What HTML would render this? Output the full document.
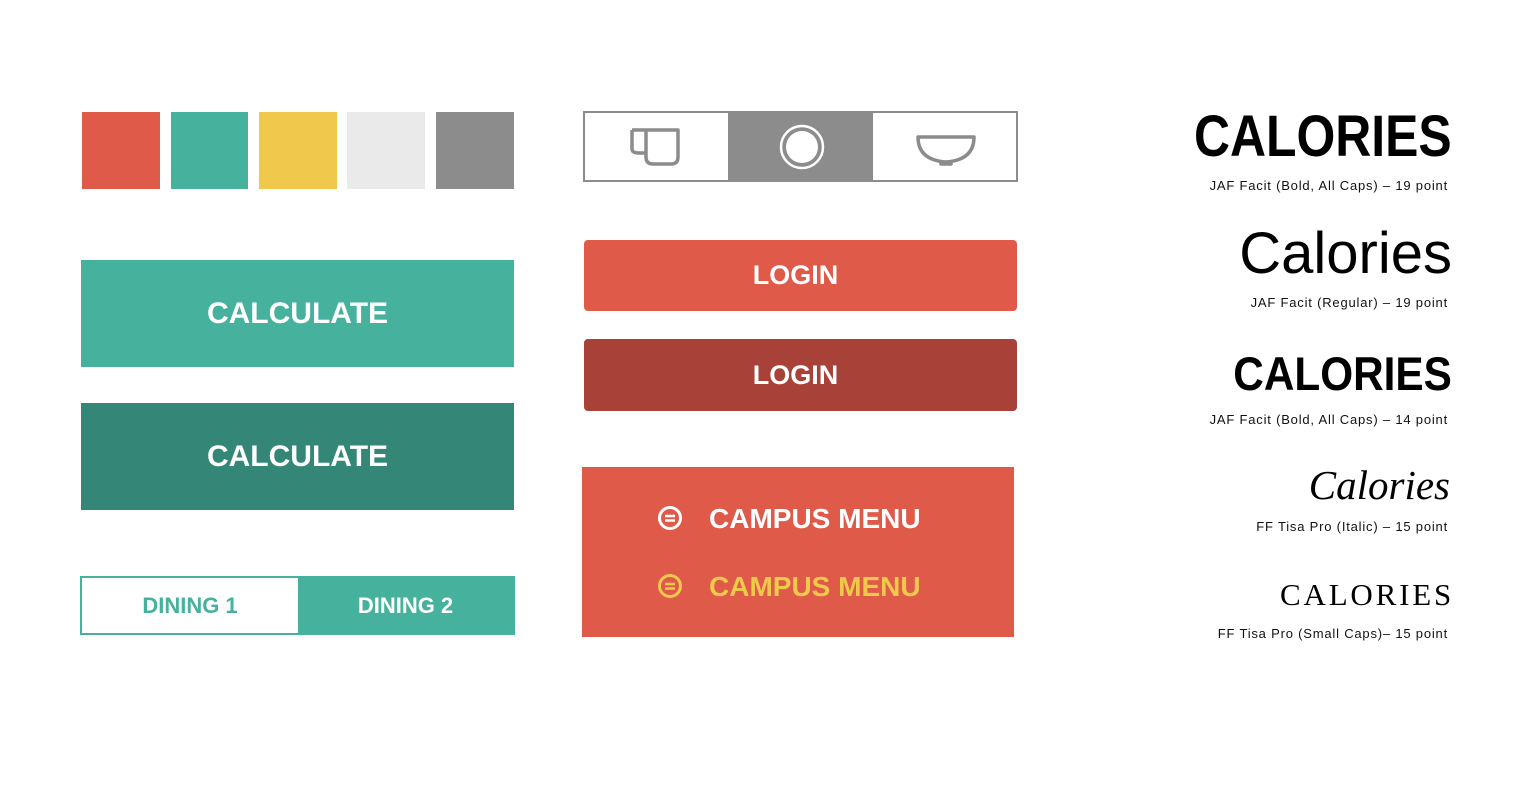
<!DOCTYPE html>
<html><head><style>
body{margin:0;width:1537px;height:801px;background:#fff;position:relative;overflow:hidden;font-family:"Liberation Sans",sans-serif}
div{position:absolute;box-sizing:border-box}
.c{display:flex;align-items:center;justify-content:center;color:#fff;font-weight:bold}
.r{right:85px;text-align:right;white-space:nowrap;transform-origin:right center}
.s{font-size:13px;color:#111;right:89px;text-align:right;white-space:nowrap;letter-spacing:0.8px}
</style></head><body>
<div style="left:82px;top:112px;width:78px;height:77px;background:#e05a4a"></div>
<div style="left:171px;top:112px;width:77px;height:77px;background:#46b29d"></div>
<div style="left:259px;top:112px;width:78px;height:77px;background:#f0c94c"></div>
<div style="left:347px;top:112px;width:78px;height:77px;background:#eaeaea"></div>
<div style="left:436px;top:112px;width:78px;height:77px;background:#8c8c8c"></div>

<div class="c" style="left:81px;top:260px;width:433px;height:107px;background:#46b29d;font-size:30px">CALCULATE</div>
<div class="c" style="left:81px;top:403px;width:433px;height:107px;background:#348676;font-size:30px">CALCULATE</div>

<div style="left:80px;top:576px;width:435px;height:59px;border:2px solid #46b29d;background:#46b29d">
 <div class="c" style="left:0;top:0;width:216px;height:55px;background:#fff;color:#46b29d;font-size:22px">DINING 1</div>
 <div class="c" style="left:216px;top:0;width:215px;height:55px;font-size:22px">DINING 2</div>
</div>

<div style="left:583px;top:111px;width:435px;height:71px;border:2px solid #8c8c8c">
 <div style="left:143px;top:0;width:145px;height:67px;background:#8c8c8c"></div>
 <svg style="position:absolute;left:0;top:0" width="431" height="67">
  <g fill="none" stroke="#8c8c8c" stroke-width="3.5" stroke-linejoin="round">
   <path d="M47 17 H93 V44 Q93 51 86 51 H68 Q61 51 61 44 V17"/>
   <path d="M47 17 V36 Q47 40 54 40 H61"/>
   <path d="M333 24 H389 Q389 47 361 49 Q333 47 333 24 Z"/>
   <path d="M356 48 V51 H366 V48"/>
  </g>
  <circle cx="217" cy="34" r="21" fill="none" stroke="#fff" stroke-width="2.5"/>
  <circle cx="217" cy="34" r="16" fill="#fff"/>
 </svg>
</div>

<div class="c" style="left:584px;top:240px;width:433px;height:71px;background:#e05a4a;border-radius:4px;font-size:27px;padding-right:10px">LOGIN</div>
<div class="c" style="left:584px;top:339px;width:433px;height:72px;background:#a84238;border-radius:4px;font-size:27px;padding-right:10px">LOGIN</div>

<div style="left:582px;top:467px;width:432px;height:170px;background:#e05a4a">
 <svg style="position:absolute;left:74px;top:39px" width="28" height="28"><circle cx="14" cy="12" r="10.5" fill="none" stroke="#fff" stroke-width="3"/><path d="M9 10H19M9 14.5H19" stroke="#fff" stroke-width="2.5"/></svg>
 <div style="left:127px;top:36px;color:#fff;font-weight:bold;font-size:28px;white-space:nowrap">CAMPUS MENU</div>
 <svg style="position:absolute;left:74px;top:107px" width="28" height="28"><circle cx="14" cy="12" r="10.5" fill="none" stroke="#f0c94c" stroke-width="3"/><path d="M9 10H19M9 14.5H19" stroke="#f0c94c" stroke-width="2.5"/></svg>
 <div style="left:127px;top:104px;color:#f0c94c;font-weight:bold;font-size:28px;white-space:nowrap">CAMPUS MENU</div>
</div>

<div class="r" style="top:103px;font-size:58px;font-weight:bold;line-height:68px;transform:scaleX(0.86)">CALORIES</div>
<div class="s" style="top:178px">JAF Facit (Bold, All Caps) – 19 point</div>
<div class="r" style="top:220px;font-size:58px;line-height:68px">Calories</div>
<div class="s" style="top:295px">JAF Facit (Regular) – 19 point</div>
<div class="r" style="top:346px;font-size:47px;font-weight:bold;line-height:56px;transform:scaleX(0.9)">CALORIES</div>
<div class="s" style="top:412px">JAF Facit (Bold, All Caps) – 14 point</div>
<div class="r" style="top:460px;font-family:'Liberation Serif',serif;font-style:italic;font-size:41px;line-height:50px;right:87px">Calories</div>
<div class="s" style="top:519px">FF Tisa Pro (Italic) – 15 point</div>
<div class="r" style="top:576px;font-family:'Liberation Serif',serif;font-size:31px;letter-spacing:2.8px;line-height:38px;right:83px">CALORIES</div>
<div class="s" style="top:626px">FF Tisa Pro (Small Caps)– 15 point</div>
</body></html>
